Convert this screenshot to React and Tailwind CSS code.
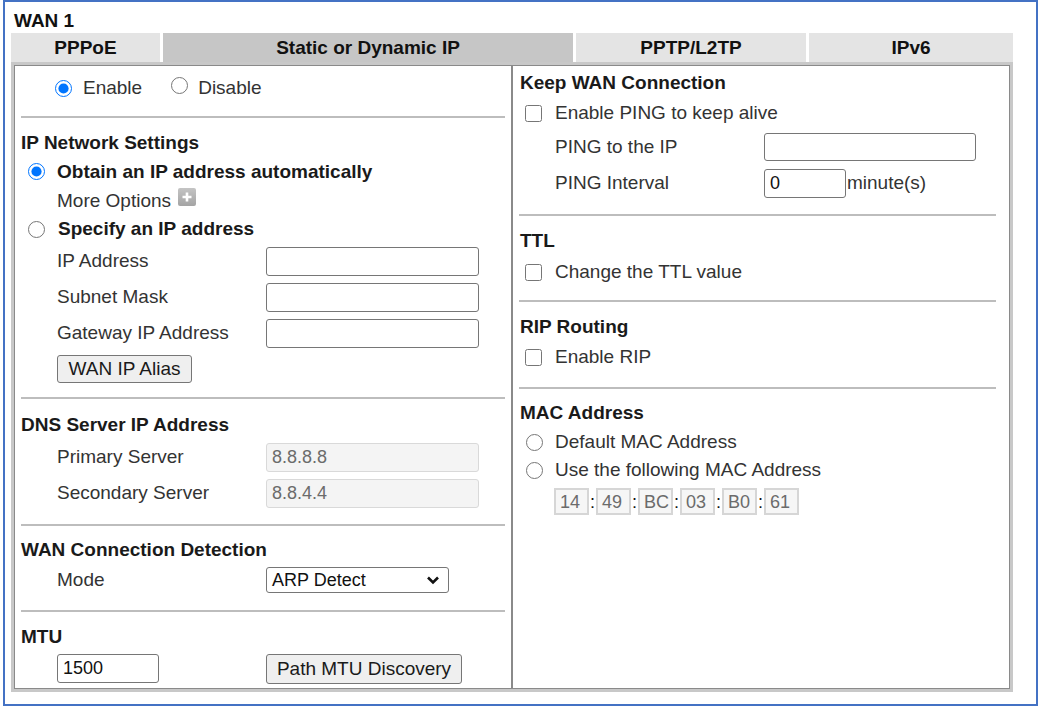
import React from "react";

const FONT = { fontFamily: '"Liberation Sans", Arial, sans-serif' };

function Divider({ className = "" }) {
  return <div className={`h-[2px] bg-[#bdbdbd] ${className}`} />;
}

function Header({ children, className = "" }) {
  return (
    <div className={`flex h-[28px] items-center font-bold text-[#1a1a1a] ${className}`}>
      {children}
    </div>
  );
}

function Radio({ checked }) {
  return (
    <input
      type="radio"
      readOnly
      checked={checked}
      className="m-0 h-[17px] w-[17px] shrink-0 accent-[#0075ff]"
    />
  );
}

function Checkbox() {
  return (
    <input
      type="checkbox"
      readOnly
      className="m-0 h-[17px] w-[17px] shrink-0"
    />
  );
}

function TextInput({ width, value = "", disabled }) {
  return (
    <input
      type="text"
      readOnly
      value={value}
      className={`h-[29px] rounded-[3px] border px-[5px] text-[18px] outline-none ${
        disabled
          ? "border-[#d9d9d9] bg-[#f4f4f4] text-[#6b6b6b]"
          : "border-[#767676] bg-white text-[#111]"
      } ${width}`}
    />
  );
}

function Button({ children, width, height = "h-[28px]" }) {
  return (
    <button
      type="button"
      className={`${width} ${height} rounded-[3px] border border-[#767676] bg-[#efefef] text-[19px] text-[#1a1a1a]`}
    >
      {children}
    </button>
  );
}

function FieldRow({ label, children, h = "h-[36px]" }) {
  return (
    <div className={`flex ${h} items-center pl-[42px]`}>
      <span className="w-[209px] shrink-0 text-[#333]">{label}</span>
      {children}
    </div>
  );
}

function LeftColumn() {
  return (
    <div className="flex w-[498px] flex-col border border-r border-[#8a8a8a] pb-[2px]">
      {/* enable / disable */}
      <div className="flex h-[44px] items-center pl-[40px] text-[#333]">
        <Radio checked />
        <span className="ml-[11px]">Enable</span>
        <span className="ml-[29px]">
          <Radio />
        </span>
        <span className="ml-[10px]">Disable</span>
      </div>
      <Divider className="mx-[6px] mt-[6px]" />

      {/* IP network settings */}
      <Header className="mt-[11px] pl-[6px]">IP Network Settings</Header>
      <div className="flex h-[29px] items-center pl-[13px] font-bold text-[#1a1a1a]">
        <Radio checked />
        <span className="ml-[12px]">Obtain an IP address automatically</span>
      </div>
      <div className="flex h-[29px] items-center pl-[42px] text-[#333]">
        <span>More Options</span>
        <span className="mb-[8px] ml-[7px] flex h-[18px] w-[18px] items-center justify-center rounded-[2px] bg-gradient-to-b from-[#c4c4c4] to-[#a4a4a4]">
          <svg width="12" height="12" viewBox="0 0 12 12">
            <path d="M6 1.5v9M1.5 6h9" stroke="#fff" strokeWidth="2.6" />
          </svg>
        </span>
      </div>
      <div className="flex h-[28px] items-center pl-[13px] font-bold text-[#1a1a1a]">
        <Radio />
        <span className="ml-[13px]">Specify an IP address</span>
      </div>
      <FieldRow label="IP Address">
        <TextInput width="w-[213px]" />
      </FieldRow>
      <FieldRow label="Subnet Mask">
        <TextInput width="w-[213px]" />
      </FieldRow>
      <FieldRow label="Gateway IP Address">
        <TextInput width="w-[213px]" />
      </FieldRow>
      <div className="flex h-[36px] items-center pl-[42px]">
        <Button width="w-[135px]">WAN IP Alias</Button>
      </div>
      <Divider className="mx-[6px] mt-[10px]" />

      {/* DNS */}
      <Header className="mt-[12px] pl-[6px]">DNS Server IP Address</Header>
      <FieldRow label="Primary Server">
        <TextInput width="w-[213px]" value="8.8.8.8" disabled />
      </FieldRow>
      <FieldRow label="Secondary Server">
        <TextInput width="w-[213px]" value="8.8.4.4" disabled />
      </FieldRow>
      <Divider className="mx-[6px] mt-[13px]" />

      {/* WAN connection detection */}
      <Header className="mt-[10px] pl-[6px]">WAN Connection Detection</Header>
      <FieldRow label="Mode" h="h-[32px]">
        <div className="flex h-[26px] w-[183px] items-center justify-between rounded-[3px] border border-[#767676] bg-white pl-[5px] pr-[8px] text-[18px] text-[#111]">
          <span>ARP Detect</span>
          <svg width="14" height="10" viewBox="0 0 14 10">
            <path d="M2 2.5l5 5 5-5" fill="none" stroke="#111" strokeWidth="2.6" />
          </svg>
        </div>
      </FieldRow>
      <Divider className="mx-[6px] mt-[14px]" />

      {/* MTU */}
      <Header className="mt-[11px] pl-[6px]">MTU</Header>
      <div className="flex h-[35px] items-center pl-[42px]">
        <TextInput width="w-[102px]" value="1500" />
        <span className="ml-[107px]">
          <Button width="w-[196px]" height="h-[30px]">
            Path MTU Discovery
          </Button>
        </span>
      </div>
    </div>
  );
}

function RightColumn() {
  const mac = ["14", "49", "BC", "03", "B0", "61"];
  return (
    <div className="flex flex-1 flex-col border border-[#8a8a8a] pt-[3px]">
      {/* keep WAN connection */}
      <Header className="pl-[7px]">Keep WAN Connection</Header>
      <div className="flex h-[32px] items-center pl-[12px] text-[#333]">
        <Checkbox />
        <span className="ml-[13px]">Enable PING to keep alive</span>
      </div>
      <FieldRow label="PING to the IP">
        <input
          type="text"
          readOnly
          className="h-[28px] w-[212px] rounded-[3px] border border-[#767676] bg-white outline-none"
        />
      </FieldRow>
      <FieldRow label="PING Interval">
        <TextInput width="w-[82px]" value="0" />
        <span className="ml-[1px] text-[#333]">minute(s)</span>
      </FieldRow>
      <Divider className="ml-[6px] mr-[13px] mt-[13px]" />

      {/* TTL */}
      <Header className="mt-[11px] pl-[7px]">TTL</Header>
      <div className="flex h-[34px] items-center pl-[12px] text-[#333]">
        <Checkbox />
        <span className="ml-[13px]">Change the TTL value</span>
      </div>
      <Divider className="ml-[6px] mr-[13px] mt-[11px]" />

      {/* RIP */}
      <Header className="mt-[11px] pl-[7px]">RIP Routing</Header>
      <div className="flex h-[32px] items-center pl-[12px] text-[#333]">
        <Checkbox />
        <span className="ml-[13px]">Enable RIP</span>
      </div>
      <Divider className="ml-[6px] mr-[13px] mt-[14px]" />

      {/* MAC address */}
      <Header className="mt-[10px] pl-[7px]">MAC Address</Header>
      <div className="flex h-[30px] items-center pl-[13px] text-[#333]">
        <Radio />
        <span className="ml-[12px]">Default MAC Address</span>
      </div>
      <div className="flex h-[26px] items-center pl-[13px] text-[#333]">
        <Radio />
        <span className="ml-[12px]">Use the following MAC Address</span>
      </div>
      <div className="mt-[5px] flex h-[27px] items-center pl-[41px]">
        {mac.map((m, i) => (
          <React.Fragment key={m + i}>
            {i > 0 && <span className="w-[7px] text-center text-[18px] text-[#111]">:</span>}
            <div className="flex h-[27px] w-[35px] items-center border-2 border-[#d6d6d6] bg-[#f6f6f6] pl-[4px] text-[18px] text-[#6b6b6b]">
              {m}
            </div>
          </React.Fragment>
        ))}
      </div>
    </div>
  );
}

export default function App() {
  const tabs = [
    { label: "PPPoE", w: "w-[149px]", active: false },
    { label: "Static or Dynamic IP", w: "w-[410px]", active: true },
    { label: "PPTP/L2TP", w: "w-[230px]", active: false },
    { label: "IPv6", w: "w-[204px]", active: false },
  ];

  return (
    <div className="bg-white" style={FONT}>
      <div className="ml-[3px] h-[706px] w-[1035px] border-2 border-[#4472c4] pl-[6px] text-[19px] leading-[22px]">
        <div className="ml-[3px] mt-[8px] h-[22px] font-bold text-[#111]">WAN 1</div>

        {/* tabs */}
        <div className="mt-[1px] flex h-[29px] w-[1002px] gap-[3px]">
          {tabs.map((t) => (
            <div
              key={t.label}
              className={`flex items-center justify-center font-bold text-[#111] ${t.w} ${
                t.active ? "bg-[#c6c6c6]" : "bg-[#e4e4e4]"
              }`}
            >
              {t.label}
            </div>
          ))}
        </div>

        {/* panel */}
        <div className="flex w-[1002px] border-[3px] border-[#c8c8c8]">
          <LeftColumn />
          <RightColumn />
        </div>
      </div>
    </div>
  );
}
